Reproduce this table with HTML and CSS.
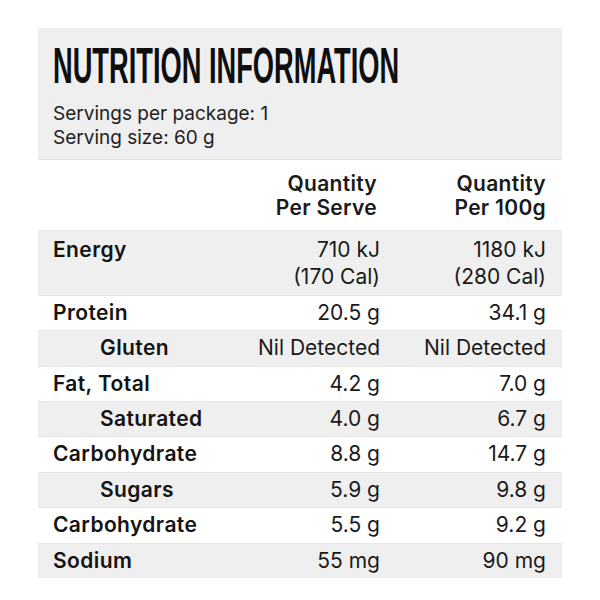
FILE: index.html
```html
<!DOCTYPE html>
<html lang="en">
<head>
<meta charset="utf-8">
<title>Nutrition Information</title>
<link rel="stylesheet" href="styles.css">
</head>
<body>
<div class="panel">
  <div class="intro">
    <h1 class="title">NUTRITION INFORMATION</h1>
    <p class="servings">Servings per package: 1<br>Serving size: 60 g</p>
  </div>
  <div class="table">
    <div class="row head">
      <div class="label"></div>
      <div class="val serve">Quantity<br>Per Serve</div>
      <div class="val">Quantity<br>Per 100g</div>
    </div>
    <div class="row grey energy">
      <div class="label">Energy</div>
      <div class="val">710 kJ<br>(170 Cal)</div>
      <div class="val">1180 kJ<br>(280 Cal)</div>
    </div>
    <div class="row">
      <div class="label">Protein</div>
      <div class="val">20.5 g</div>
      <div class="val">34.1 g</div>
    </div>
    <div class="row grey">
      <div class="label sub">Gluten</div>
      <div class="val">Nil Detected</div>
      <div class="val">Nil Detected</div>
    </div>
    <div class="row">
      <div class="label">Fat, Total</div>
      <div class="val">4.2 g</div>
      <div class="val">7.0 g</div>
    </div>
    <div class="row grey">
      <div class="label sub">Saturated</div>
      <div class="val">4.0 g</div>
      <div class="val">6.7 g</div>
    </div>
    <div class="row">
      <div class="label">Carbohydrate</div>
      <div class="val">8.8 g</div>
      <div class="val">14.7 g</div>
    </div>
    <div class="row grey">
      <div class="label sub">Sugars</div>
      <div class="val">5.9 g</div>
      <div class="val">9.8 g</div>
    </div>
    <div class="row">
      <div class="label">Carbohydrate</div>
      <div class="val">5.5 g</div>
      <div class="val">9.2 g</div>
    </div>
    <div class="row grey last">
      <div class="label">Sodium</div>
      <div class="val">55 mg</div>
      <div class="val">90 mg</div>
    </div>
  </div>
</div>
</body>
</html>
```

FILE: styles.css
```css
html, body {
  margin: 0;
  padding: 0;
  background: #ffffff;
}

body {
  font-family: Inter, "Liberation Sans", sans-serif;
  color: #141414;
}

.panel {
  width: 524px;
  margin: 28px 0 0 38px;
}

.intro {
  background: #efefef;
  padding: 10px 15px 13px 15px;
  height: 108px;
  border-bottom: 1px solid #e4e4e4;
}

.title {
  margin: 0;
  font-family: "Liberation Sans", sans-serif;
  font-weight: 700;
  font-size: 50px;
  line-height: 56px;
  letter-spacing: 0;
  transform: scaleX(0.545);
  transform-origin: left center;
  white-space: nowrap;
  color: #0e0e0e;
}

.servings {
  margin: 8px 0 0 0;
  font-size: 19px;
  line-height: 23.5px;
  color: #222;
}

.row {
  display: grid;
  grid-template-columns: 1fr 166px 166px;
  padding: 5px 16px 5px 15px;
  line-height: 24.4px;
  font-size: 21px;
  border-bottom: 1px solid #e6e6e6;
}

.row.grey {
  background: #efefef;
}

.row.last {
  border-bottom: none;
}

.row.head {
  padding-top: 12px;
  padding-bottom: 9px;
  font-weight: 600;
}

.row.head .val {
  letter-spacing: 0.3px;
}

.row.head .val.serve {
  padding-right: 3px;
}

.row.energy {
  padding-top: 5px;
  padding-bottom: 5px;
  line-height: 27px;
}

.label {
  font-weight: 600;
  letter-spacing: 0.4px;
}

.label.sub {
  padding-left: 47px;
}

.val {
  text-align: right;
  color: #1a1a1a;
}
```
